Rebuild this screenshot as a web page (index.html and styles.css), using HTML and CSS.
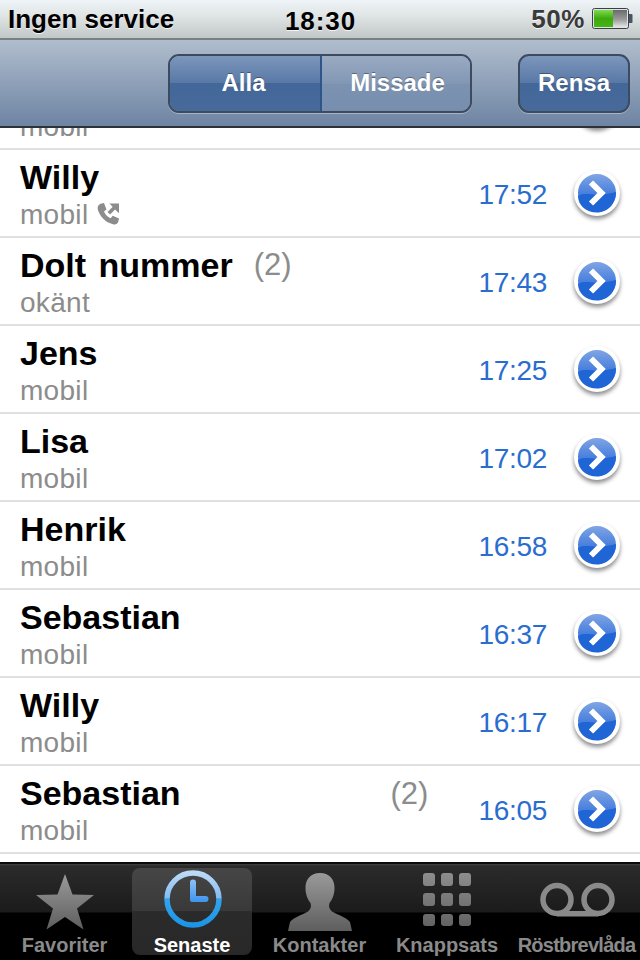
FILE: index.html
```html
<!DOCTYPE html>
<html lang="sv">
<head>
<meta charset="utf-8">
<title>Senaste</title>
<link rel="stylesheet" href="styles.css">
</head>
<body>
<svg class="defs" width="0" height="0" aria-hidden="true">
  <defs>
    <linearGradient id="disc" x1="0" y1="0" x2="0" y2="1">
      <stop offset="0" stop-color="#86a9e6"/><stop offset="0.5" stop-color="#4a80dd"/><stop offset="1" stop-color="#2f74dc"/>
    </linearGradient>
    <linearGradient id="tabgrey" x1="0" y1="0" x2="0" y2="1">
      <stop offset="0" stop-color="#9a9a9a"/><stop offset="1" stop-color="#5e5e5e"/>
    </linearGradient>
    <linearGradient id="padgrey" gradientUnits="userSpaceOnUse" x1="0" y1="0" x2="0" y2="54">
      <stop offset="0" stop-color="#8e8e8e"/><stop offset="1" stop-color="#636363"/>
    </linearGradient>
    <linearGradient id="clockring" x1="0" y1="0" x2="0" y2="1">
      <stop offset="0" stop-color="#bcd9f7"/><stop offset="0.47" stop-color="#84bcf2"/><stop offset="0.5" stop-color="#32a4ee"/><stop offset="1" stop-color="#1d95e6"/>
    </linearGradient>
    <linearGradient id="clockhand" x1="0" y1="0" x2="0" y2="1">
      <stop offset="0" stop-color="#8cc2f6"/><stop offset="1" stop-color="#3f94ec"/>
    </linearGradient>
    <symbol id="chev" viewBox="0 0 52 54">
      <circle cx="26" cy="26" r="21" fill="url(#disc)" stroke="#fff" stroke-width="4"/>
      <path d="M7 29 C14 24 24 31 45 25 C45 36 37 45.5 26 45.5 C15 45.5 7 38 7 29Z" fill="#2065d6"/>
      <path d="M20 15.5 L30.5 26 L20 36.5" fill="none" stroke="#fff" stroke-width="6" stroke-linecap="butt" stroke-linejoin="miter"/>
    </symbol>
  </defs>
</svg>
<div class="phone">
  <div class="status">
    <span class="carrier">Ingen service</span>
    <span class="clock">18:30</span>
    <span class="battery"><span class="pct">50%</span>
      <svg class="batt" width="42" height="22" viewBox="0 0 42 22">
        <defs>
          <linearGradient id="bg" x1="0" y1="0" x2="0" y2="1"><stop offset="0" stop-color="#7ddc4e"/><stop offset="0.5" stop-color="#3ea80f"/><stop offset="1" stop-color="#43b713"/></linearGradient>
          <linearGradient id="bd" x1="0" y1="0" x2="0" y2="1"><stop offset="0" stop-color="#6a6a6a"/><stop offset="0.55" stop-color="#9a9a9a"/><stop offset="1" stop-color="#e4e4e4"/></linearGradient>
        </defs>
        <rect x="0.5" y="0.5" width="36" height="20" rx="2" fill="#dfe3e4" stroke="#39404a"/>
        <rect x="2" y="2" width="19" height="17" fill="url(#bg)"/>
        <rect x="21" y="2" width="14" height="17" fill="url(#bd)"/>
        <path d="M37 6h2.5a1 1 0 0 1 1 1v7a1 1 0 0 1-1 1H37z" fill="#4a5464"/>
      </svg>
    </span>
  </div>
  <header class="nav">
    <div class="segment">
      <span class="seg seg-on">Alla</span>
      <span class="seg seg-off">Missade</span>
    </div>
    <span class="clear">Rensa</span>
  </header>
  <main class="list">
    <div class="row row-clip">
      <div class="row-clip-text">mobil</div>
      <svg class="chev chev-clip" width="52" height="54"><use href="#chev"/></svg>
    </div>
    <div class="row">
      <div class="who"><div class="name">Willy</div><div class="sub">mobil
        <svg class="outgoing" width="24" height="24" viewBox="0 0 24 24"><path d="M4.5 1.8 L8 1 L10.5 7.5 L8 9.6 C9 12.5 11.5 15 14.6 16.2 L16.8 13.8 L23 16.6 L22.2 20 C21.5 22 19.5 22.8 17 22.2 C9.5 20.5 3.8 14.6 1.8 7.5 C1.2 5 2.4 2.8 4.5 1.8Z" fill="#8c8c8c"/><path d="M12.8 11.2 L19 5" stroke="#8c8c8c" stroke-width="3.6" fill="none"/><path d="M13.4 1.6 H23 V11.2 L19.6 8 L16.6 4.8Z" fill="#8c8c8c"/></svg></div></div>
      <span class="time">17:52</span>
      <svg class="chev" width="52" height="54"><use href="#chev"/></svg>
    </div>
    <div class="row">
      <div class="who"><div class="name">Dolt nummer<span class="count count-near">(2)</span></div><div class="sub">okänt</div></div>
      <span class="time">17:43</span>
      <svg class="chev" width="52" height="54"><use href="#chev"/></svg>
    </div>
    <div class="row">
      <div class="who"><div class="name">Jens</div><div class="sub">mobil</div></div>
      <span class="time">17:25</span>
      <svg class="chev" width="52" height="54"><use href="#chev"/></svg>
    </div>
    <div class="row">
      <div class="who"><div class="name">Lisa</div><div class="sub">mobil</div></div>
      <span class="time">17:02</span>
      <svg class="chev" width="52" height="54"><use href="#chev"/></svg>
    </div>
    <div class="row">
      <div class="who"><div class="name">Henrik</div><div class="sub">mobil</div></div>
      <span class="time">16:58</span>
      <svg class="chev" width="52" height="54"><use href="#chev"/></svg>
    </div>
    <div class="row">
      <div class="who"><div class="name">Sebastian</div><div class="sub">mobil</div></div>
      <span class="time">16:37</span>
      <svg class="chev" width="52" height="54"><use href="#chev"/></svg>
    </div>
    <div class="row">
      <div class="who"><div class="name">Willy</div><div class="sub">mobil</div></div>
      <span class="time">16:17</span>
      <svg class="chev" width="52" height="54"><use href="#chev"/></svg>
    </div>
    <div class="row">
      <div class="who"><div class="name">Sebastian</div><div class="sub">mobil</div></div>
      <span class="count count-far">(2)</span>
      <span class="time">16:05</span>
      <svg class="chev" width="52" height="54"><use href="#chev"/></svg>
    </div>
  </main>
  <nav class="tabs">
    <div class="tab tab-first">
      <svg class="tab-icon" width="64" height="60" viewBox="0 0 64 60"><path d="M32 2 L39.5 22.5 L61 23 L44 36.5 L50.5 57.5 L32 45 L13.5 57.5 L20 36.5 L3 23 L24.5 22.5Z" fill="url(#tabgrey)"/></svg>
      <span class="tab-label">Favoriter</span>
    </div>
    <div class="tab tab-on">
      <svg class="tab-icon" width="64" height="60" viewBox="0 0 64 60"><circle cx="33" cy="27" r="26" fill="none" stroke="url(#clockring)" stroke-width="5.5"/><path d="M30 10.5 a3 3 0 0 1 6 0 V24 H45.5 a3 3 0 0 1 0 6 H32 a2 2 0 0 1-2-2Z" fill="url(#clockhand)"/></svg>
      <span class="tab-label">Senaste</span>
    </div>
    <div class="tab">
      <svg class="tab-icon" width="68" height="60" viewBox="0 0 68 60"><path d="M34 1 C44 1 49 8 48.5 17 C48.3 23 46 28 43.5 31 C42.5 34 43 37 46 39.5 C52 43 60 45 64 50 L66 59 H2 L4 50 C8 45 16 43 22 39.5 C25 37 25.5 34 24.5 31 C22 28 19.7 23 19.5 17 C19 8 24 1 34 1Z" fill="url(#tabgrey)"/></svg>
      <span class="tab-label">Kontakter</span>
    </div>
    <div class="tab">
      <svg class="tab-icon" width="48" height="60" viewBox="0 0 48 60"><g fill="url(#padgrey)"><rect x="0" y="1" width="12" height="13" rx="3"/><rect x="18" y="1" width="12" height="13" rx="3"/><rect x="36" y="1" width="12" height="13" rx="3"/><rect x="0" y="21" width="12" height="13" rx="3"/><rect x="18" y="21" width="12" height="13" rx="3"/><rect x="36" y="21" width="12" height="13" rx="3"/><rect x="0" y="42" width="12" height="12" rx="3"/><rect x="18" y="42" width="12" height="12" rx="3"/><rect x="36" y="42" width="12" height="12" rx="3"/></g></svg>
      <span class="tab-label">Knappsats</span>
    </div>
    <div class="tab tab-last">
      <svg class="tab-icon" width="76" height="60" viewBox="0 0 76 60"><circle cx="18" cy="27.5" r="14" fill="none" stroke="#8a8a8a" stroke-width="5.5"/><circle cx="59" cy="27.5" r="14" fill="none" stroke="#8a8a8a" stroke-width="5.5"/><rect x="18" y="39" width="41" height="5.5" fill="#8a8a8a"/></svg>
      <span class="tab-label tab-label-tight">Röstbrevlåda</span>
    </div>
  </nav>
</div>
</body>
</html>
```
FILE: styles.css
```css
* { box-sizing: border-box; }
html, body { margin: 0; padding: 0; }
body { font-family: "Liberation Sans", Arial, sans-serif; background: #fff; }
.defs { position: absolute; }
.phone { width: 640px; height: 960px; display: flex; flex-direction: column; overflow: hidden; }

.status {
  height: 40px; flex: none; display: flex; align-items: center; justify-content: space-between;
  padding: 0 6px 0 8px; position: relative; font-weight: bold; font-size: 26px; color: #000;
  background: linear-gradient(#eef4f7, #e0e5e6 40%, #c2c8c8);
  border-bottom: 2px solid #7b8084;
  text-shadow: 0 1px 0 rgba(255,255,255,.8);
}
.clock { position: absolute; left: 285px; top: 6px; letter-spacing: 0.9px; }
.battery { display: flex; align-items: center; gap: 7px; color: #3a3a3a; }
.pct { letter-spacing: 0.6px; font-size: 26px; }
.batt { margin-top: -1px; }

.nav {
  height: 88px; flex: none; display: flex; align-items: center; justify-content: flex-end;
  padding: 0 10px 0 0; gap: 46px;
  background: linear-gradient(#b0bdcd, #6d84a3);
  border-bottom: 2px solid #2d3239;
  position: relative; z-index: 2;
}
.segment {
  display: flex; width: 304px; height: 59px; border-radius: 11px; overflow: hidden;
  border: 2px solid #3d4b60; box-shadow: 0 1px 0 rgba(255,255,255,.35);
  color: #fff; font-weight: bold; font-size: 24px;
  text-shadow: 0 -1px 0 rgba(0,0,0,.35);
}
.seg { display: flex; align-items: center; justify-content: center; }
.seg-on { width: 152px; padding-right: 3px; background: linear-gradient(#7d97bc, #5878a6 49%, #446799 50%, #476a9b); border-right: 2px solid #2f5489; }
.seg-off { flex: 1; padding-left: 3px; background: linear-gradient(#9aaac2, #8297b4 50%, #7c92b1 50%, #778eae); }
.clear {
  width: 112px; height: 59px; border-radius: 11px; display: flex; align-items: center; justify-content: center;
  color: #fff; font-weight: bold; font-size: 24px;
  border: 2px solid #3d4b60; box-shadow: 0 1px 0 rgba(255,255,255,.35);
  background: linear-gradient(#7d97bc, #5878a6 49%, #446799 50%, #476a9b);
  text-shadow: 0 -1px 0 rgba(0,0,0,.35);
}

.list { flex: 1; overflow: hidden; background: #fff; min-height: 0; margin-bottom: 8px; }
.row {
  height: 88px; display: flex; align-items: center; padding: 0 17px 0 20px;
  border-bottom: 2px solid #e0e0e0;
}
.row-clip { height: 22px; position: relative; overflow: hidden; }
.row-clip-text { font-size: 28px; letter-spacing: 0.3px; color: #8c8c8c; line-height: 32px; margin-top: -23px; }
.chev-clip { position: absolute; right: 17px; top: -51px; margin-top: 0; }
.who { flex: 1; min-width: 0; padding-top: 7px; }
.name { font-size: 34px; word-spacing: 3px; font-weight: bold; color: #000; line-height: 36px; margin-top: -4px; display: flex; }
.sub { font-size: 28px; letter-spacing: 0.3px; color: #8c8c8c; line-height: 32px; margin-top: 4px; display: flex; align-items: center; gap: 8px; }
.outgoing { flex: none; margin-top: -2px; }
.count { font-weight: normal; font-size: 31px; color: #8c8c8c; word-spacing: 0; }
.count-near { margin-left: 21px; }
.count-far { line-height: 36px; margin-top: -30px; margin-right: 50px; }
.time { font-size: 28px; letter-spacing: -0.3px; color: #2a6dd0; margin-right: 24px; margin-top: 3px; }
.chev { flex: none; margin-top: 2px; filter: drop-shadow(0 3px 2px rgba(0,0,0,.45)); }

.tabs {
  height: 98px; flex: none; display: grid; grid-template-columns: 132px 120px 135px 120px 133px;
  padding: 4px 0 5px;
  background: linear-gradient(#414141 0, #2b2b2b 2px, #1b1b1b 48px, #000 49px);
  border-top: 2px solid #0a0a0a;
}
.tab {
  display: flex; flex-direction: column; align-items: center; justify-content: flex-end;
  border-radius: 6px; overflow: visible;
}
.tab-first { padding-right: 3px; }
.tab-last { padding-left: 6px; }
.tab-on { background: linear-gradient(#464646, #393939 49%, #2b2b2b 50%, #282828); border-radius: 8px; }
.tab-icon { height: 60px; display: block; flex: none; margin-bottom: 1px; overflow: visible; }
.tab-label { font-size: 20px; font-weight: bold; color: #8a8a8a; line-height: 24px; margin-bottom: -2px; white-space: nowrap; }
.tab-label-tight { letter-spacing: -0.75px; }
.tab-on .tab-label { color: #fff; }
```
